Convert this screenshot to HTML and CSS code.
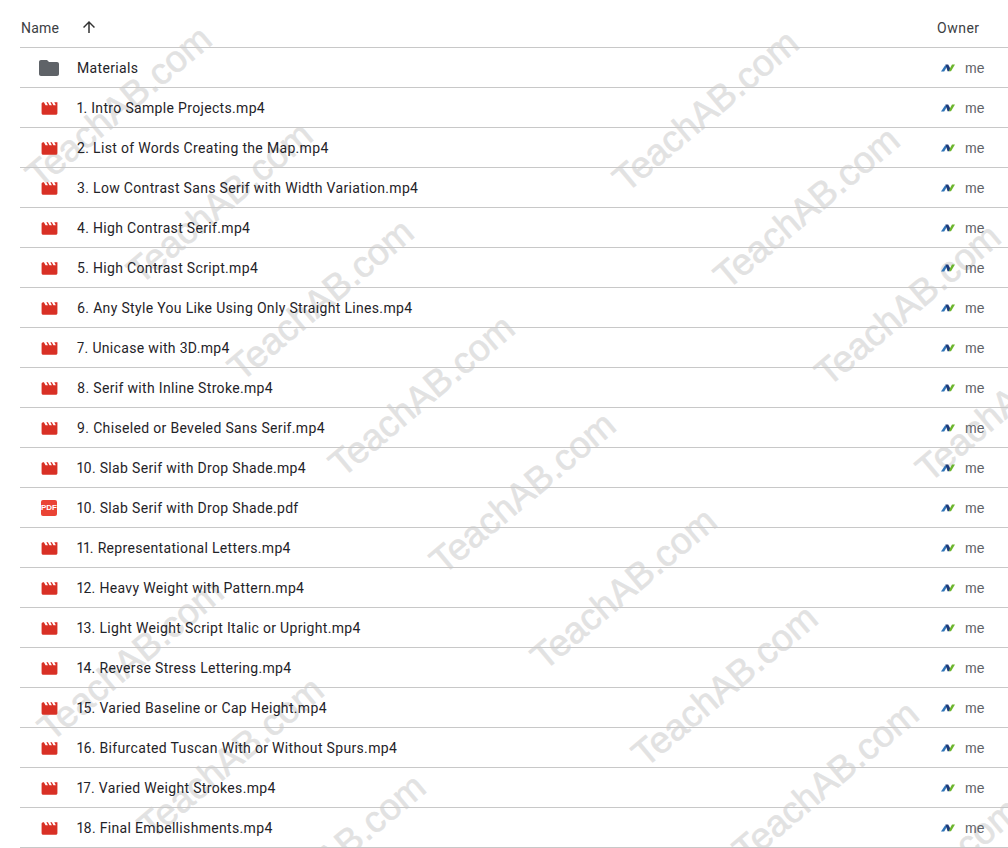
FILE: index.html
```html
<!DOCTYPE html>
<html lang="en">

<head>
    <meta charset="UTF-8">
    <title>Files</title>
    <link rel="stylesheet" href="styles.css">
</head>

<body>
    <div class="watermarks">
        <span class="wm a1">TeachAB.com</span>
        <span class="wm a2">TeachAB.com</span>
        <span class="wm a3">TeachAB.com</span>
        <span class="wm a4">TeachAB.com</span>
        <span class="wm a5">TeachAB.com</span>
        <span class="wm a6">TeachAB.com</span>
        <span class="wm a7">TeachAB.com</span>
        <span class="wm a8">TeachAB.com</span>
        <span class="wm a9">TeachAB.com</span>
        <span class="wm b1">TeachAB.com</span>
        <span class="wm b2">TeachAB.com</span>
        <span class="wm b3">TeachAB.com</span>
        <span class="wm b4">TeachAB.com</span>
        <span class="wm c1">TeachAB.com</span>
        <span class="wm c2">TeachAB.com</span>
        <span class="wm c3">TeachAB.com</span>
    </div>

    <svg class="defs" width="0" height="0">
        <symbol id="movie" viewBox="0 0 24 24">
            <path d="M18 4l2 4h-3l-2-4h-2l2 4h-3l-2-4H8l2 4H7L5 4H4c-1.1 0-1.99.9-1.99 2L2 18c0 1.1.9 2 2 2h16c1.1 0 2-.9 2-2V4h-4z" />
        </symbol>
        <symbol id="avatar" viewBox="0 0 14 8">
            <path d="M0 7.5L4 1.5L6.6 1.5L3.2 7.5Z" fill="#2f74b8" />
            <path d="M4.4 0.6L7.2 0.6L9.6 5L8.4 7.2L6.6 7.2Z" fill="#1d3a78" />
            <path d="M8.6 5L11 0.5L14 0.5L10 7.2L8.2 7.2Z" fill="#6cb52d" />
        </symbol>
    </svg>

    <div class="file-list">
        <div class="list-head">
            <span class="head-name">Name</span>
            <svg class="sort-arrow" viewBox="0 0 24 24">
                <path d="M4 12l1.41 1.41L11 7.83V20h2V7.83l5.58 5.59L20 12l-8-8-8 8z" />
            </svg>
            <span class="head-owner">Owner</span>
        </div>

        <div class="row">
            <span class="icon-cell">
                <svg class="folder-icon" viewBox="0 0 24 24">
                    <path d="M10 4H4c-1.1 0-2 .9-2 2v12c0 1.1.9 2 2 2h16c1.1 0 2-.9 2-2V8c0-1.1-.9-2-2-2h-8l-2-2z" />
                </svg>
            </span>
            <span class="file-name">Materials</span>
            <span class="owner"><svg class="avatar"><use href="#avatar" /></svg><span class="me">me</span></span>
        </div>
        <div class="row">
            <span class="icon-cell"><svg class="movie-icon"><use href="#movie" /></svg></span>
            <span class="file-name">1. Intro Sample Projects.mp4</span>
            <span class="owner"><svg class="avatar"><use href="#avatar" /></svg><span class="me">me</span></span>
        </div>
        <div class="row">
            <span class="icon-cell"><svg class="movie-icon"><use href="#movie" /></svg></span>
            <span class="file-name">2. List of Words Creating the Map.mp4</span>
            <span class="owner"><svg class="avatar"><use href="#avatar" /></svg><span class="me">me</span></span>
        </div>
        <div class="row">
            <span class="icon-cell"><svg class="movie-icon"><use href="#movie" /></svg></span>
            <span class="file-name">3. Low Contrast Sans Serif with Width Variation.mp4</span>
            <span class="owner"><svg class="avatar"><use href="#avatar" /></svg><span class="me">me</span></span>
        </div>
        <div class="row">
            <span class="icon-cell"><svg class="movie-icon"><use href="#movie" /></svg></span>
            <span class="file-name">4. High Contrast Serif.mp4</span>
            <span class="owner"><svg class="avatar"><use href="#avatar" /></svg><span class="me">me</span></span>
        </div>
        <div class="row">
            <span class="icon-cell"><svg class="movie-icon"><use href="#movie" /></svg></span>
            <span class="file-name">5. High Contrast Script.mp4</span>
            <span class="owner"><svg class="avatar"><use href="#avatar" /></svg><span class="me">me</span></span>
        </div>
        <div class="row">
            <span class="icon-cell"><svg class="movie-icon"><use href="#movie" /></svg></span>
            <span class="file-name">6. Any Style You Like Using Only Straight Lines.mp4</span>
            <span class="owner"><svg class="avatar"><use href="#avatar" /></svg><span class="me">me</span></span>
        </div>
        <div class="row">
            <span class="icon-cell"><svg class="movie-icon"><use href="#movie" /></svg></span>
            <span class="file-name">7. Unicase with 3D.mp4</span>
            <span class="owner"><svg class="avatar"><use href="#avatar" /></svg><span class="me">me</span></span>
        </div>
        <div class="row">
            <span class="icon-cell"><svg class="movie-icon"><use href="#movie" /></svg></span>
            <span class="file-name">8. Serif with Inline Stroke.mp4</span>
            <span class="owner"><svg class="avatar"><use href="#avatar" /></svg><span class="me">me</span></span>
        </div>
        <div class="row">
            <span class="icon-cell"><svg class="movie-icon"><use href="#movie" /></svg></span>
            <span class="file-name">9. Chiseled or Beveled Sans Serif.mp4</span>
            <span class="owner"><svg class="avatar"><use href="#avatar" /></svg><span class="me">me</span></span>
        </div>
        <div class="row">
            <span class="icon-cell"><svg class="movie-icon"><use href="#movie" /></svg></span>
            <span class="file-name">10. Slab Serif with Drop Shade.mp4</span>
            <span class="owner"><svg class="avatar"><use href="#avatar" /></svg><span class="me">me</span></span>
        </div>
        <div class="row">
            <span class="icon-cell"><span class="pdf-icon">PDF</span></span>
            <span class="file-name">10. Slab Serif with Drop Shade.pdf</span>
            <span class="owner"><svg class="avatar"><use href="#avatar" /></svg><span class="me">me</span></span>
        </div>
        <div class="row">
            <span class="icon-cell"><svg class="movie-icon"><use href="#movie" /></svg></span>
            <span class="file-name">11. Representational Letters.mp4</span>
            <span class="owner"><svg class="avatar"><use href="#avatar" /></svg><span class="me">me</span></span>
        </div>
        <div class="row">
            <span class="icon-cell"><svg class="movie-icon"><use href="#movie" /></svg></span>
            <span class="file-name">12. Heavy Weight with Pattern.mp4</span>
            <span class="owner"><svg class="avatar"><use href="#avatar" /></svg><span class="me">me</span></span>
        </div>
        <div class="row">
            <span class="icon-cell"><svg class="movie-icon"><use href="#movie" /></svg></span>
            <span class="file-name">13. Light Weight Script Italic or Upright.mp4</span>
            <span class="owner"><svg class="avatar"><use href="#avatar" /></svg><span class="me">me</span></span>
        </div>
        <div class="row">
            <span class="icon-cell"><svg class="movie-icon"><use href="#movie" /></svg></span>
            <span class="file-name">14. Reverse Stress Lettering.mp4</span>
            <span class="owner"><svg class="avatar"><use href="#avatar" /></svg><span class="me">me</span></span>
        </div>
        <div class="row">
            <span class="icon-cell"><svg class="movie-icon"><use href="#movie" /></svg></span>
            <span class="file-name">15. Varied Baseline or Cap Height.mp4</span>
            <span class="owner"><svg class="avatar"><use href="#avatar" /></svg><span class="me">me</span></span>
        </div>
        <div class="row">
            <span class="icon-cell"><svg class="movie-icon"><use href="#movie" /></svg></span>
            <span class="file-name">16. Bifurcated Tuscan With or Without Spurs.mp4</span>
            <span class="owner"><svg class="avatar"><use href="#avatar" /></svg><span class="me">me</span></span>
        </div>
        <div class="row">
            <span class="icon-cell"><svg class="movie-icon"><use href="#movie" /></svg></span>
            <span class="file-name">17. Varied Weight Strokes.mp4</span>
            <span class="owner"><svg class="avatar"><use href="#avatar" /></svg><span class="me">me</span></span>
        </div>
        <div class="row">
            <span class="icon-cell"><svg class="movie-icon"><use href="#movie" /></svg></span>
            <span class="file-name">18. Final Embellishments.mp4</span>
            <span class="owner"><svg class="avatar"><use href="#avatar" /></svg><span class="me">me</span></span>
        </div>
    </div>
</body>

</html>
```

FILE: styles.css
```css
html,
body {
    margin: 0;
    height: 848px;
    overflow: hidden;
    background: #fff;
}

body {
    position: relative;
    font-family: Roboto, "Liberation Sans", sans-serif;
    font-size: 14px;
    font-variant-numeric: proportional-nums;
}

.defs {
    position: absolute;
}

.file-list {
    position: relative;
    padding-left: 20px;
}

.list-head {
    display: flex;
    align-items: center;
    height: 39px;
    padding-top: 8px;
    border-bottom: 1px solid #c8c8c8;
    color: #3c4043;
}

.head-name {
    margin-left: 1px;
    letter-spacing: 0.2px;
}

.sort-arrow {
    width: 18px;
    height: 18px;
    margin-left: 21px;
    margin-top: -2px;
    fill: #333;
}

.head-owner {
    margin-left: auto;
    width: 71px;
    letter-spacing: 0.5px;
}

.row {
    display: flex;
    align-items: center;
    height: 39px;
    border-bottom: 1px solid #c8c8c8;
}

.icon-cell {
    display: flex;
    align-items: center;
    justify-content: center;
    width: 24px;
    height: 24px;
    margin-left: 17px;
    margin-right: 16px;
}

.folder-icon {
    width: 24px;
    height: 24px;
    fill: #5f6368;
}

.movie-icon {
    width: 19px;
    height: 19px;
    margin-top: 2px;
    fill: #d93025;
}

.pdf-icon {
    width: 16px;
    height: 16px;
    border-radius: 2px;
    background: #ea4335;
    color: #fff;
    font: bold 8px/16px "Liberation Sans", sans-serif;
    text-align: center;
}

.file-name {
    color: #1f2328;
    letter-spacing: 0.33px;
}

.owner {
    display: flex;
    align-items: center;
    margin-left: auto;
    width: 67px;
}

.avatar {
    width: 14px;
    height: 8px;
    margin-right: 10px;
}

.me {
    font-family: "Liberation Sans", sans-serif;
    color: #5f6368;
}

/* watermark, sits behind the rows */
.watermarks {
    position: absolute;
    inset: 0;
    overflow: hidden;
}

.wm {
    position: absolute;
    width: 246px;
    height: 46px;
    font: 37px/46px "Liberation Sans", sans-serif;
    color: #e2e2e2;
    -webkit-text-stroke: 0.6px #e2e2e2;
    text-align: center;
    white-space: nowrap;
    transform: rotate(-40deg);
}

.a1 { left: -4px; top: 84px; }
.a2 { left: 97px; top: 180px; }
.a3 { left: 198px; top: 277px; }
.a4 { left: 299px; top: 373px; }
.a5 { left: 400px; top: 470px; }
.a6 { left: 501px; top: 566px; }
.a7 { left: 602px; top: 663px; }
.a8 { left: 703px; top: 759px; }
.a9 { left: 804px; top: 856px; }
.b1 { left: 583px; top: 88px; }
.b2 { left: 684px; top: 185px; }
.b3 { left: 785px; top: 282px; }
.b4 { left: 886px; top: 378px; }
.c1 { left: 8px; top: 637px; }
.c2 { left: 108px; top: 735px; }
.c3 { left: 210px; top: 832px; }
```
